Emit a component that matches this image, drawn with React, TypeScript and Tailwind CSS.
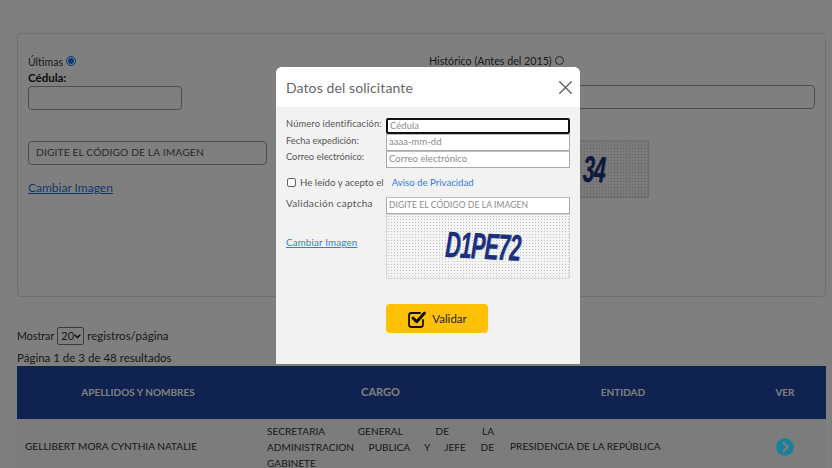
import { FaChevronCircleRight } from "react-icons/fa";
import { X } from "lucide-react";

const font = "font-['Lato','Open_Sans',sans-serif]";

function Captcha({ text, className }: { text: string; className: string }) {
  return (
    <div
      className={`flex items-center bg-[#f4f4f4] bg-[radial-gradient(#c4c4c4_0.7px,transparent_0.8px)] bg-[length:3px_3px] border border-[#d8d8d8] overflow-hidden ${className}`}
    >
      <span className="w-full text-center font-['Liberation_Sans',sans-serif] italic font-bold text-[37px] leading-none tracking-[-1px] text-[#1d2f78] [text-shadow:1px_0_0_#7f92d0] [transform:rotate(3deg)_scaleX(0.57)]">
        {text}
      </span>
    </div>
  );
}

function ModalField({ placeholder, focused, className }: { placeholder: string; focused?: boolean; className?: string }) {
  return (
    <div
      className={`px-[2px] bg-white flex items-center text-[#8a8a8a] tracking-[0.1px] ${className ?? "text-[9.4px]"} ${
        focused ? "border-[#111] border-2 rounded-[2px] h-[16px]" : "h-[17px] border border-[#a9a9a9] border-t-[#bcbcbc]"
      }`}
    >
      {placeholder}
    </div>
  );
}

export default function App() {
  return (
    <div className={`relative h-[468px] w-[832px] overflow-hidden bg-white text-[#212121] ${font}`}>
      <div className="pt-[33px] pl-[17px] pr-[6px]">
        <div className="h-[264px] rounded-[4px] border border-[#e0e0e0] px-[10px] pt-[21px] flex">
          <div className="w-[401px] shrink-0">
            <div className="flex items-center h-[15px] text-[10.5px] text-[#333]">
              Últimas
              <span className="ml-[3px] mb-[3px] w-[10px] h-[10px] rounded-full border-[1.5px] border-[#0a75e0] flex items-center justify-center">
                <span className="w-[6px] h-[6px] rounded-full bg-[#0a75e0]" />
              </span>
            </div>
            <div className="text-[11.5px] font-bold leading-[15px]">Cédula:</div>
            <div className="mt-[1px] w-[154px] h-[24px] rounded-[4px] border border-[#9a9a9a] bg-white" />
            <div className="mt-[31px] w-[239px] h-[24px] rounded-[4px] border border-[#9a9a9a] px-[7px] flex items-center text-[10.3px] text-[#555] tracking-[0.1px]">
              DIGITE EL CÓDIGO DE LA IMAGEN
            </div>
            <a className="block mt-[16px] text-[12px] underline text-[#1f6fd6] leading-[14px]">Cambiar Imagen</a>
          </div>
          <div className="flex-1">
            <div className="flex items-center h-[15px] -mt-[1px] text-[10.7px] text-[#333]">
              Histórico (Antes del 2015)
              <span className="ml-[3px] mb-[3px] w-[9px] h-[9px] rounded-full border border-[#555]" />
            </div>
            <div className="mt-[16px] h-[24px] rounded-[4px] border border-[#9a9a9a]" />
            <Captcha text="34" className="mt-[31px] w-[220px] h-[58px] pl-[110px]" />
          </div>
        </div>

        <div className="mt-[30px] flex items-center h-[18px] text-[11.5px] text-[#333]">
          <span className="text-[10.7px]">Mostrar</span>
          <span className="mx-[3px] w-[27px] h-[18px] border border-[#777] rounded-[2px] flex items-center justify-between pl-[3px] pr-[2px] text-[11px]">
            20
            <svg width="7" height="5" viewBox="0 0 7 5" fill="none" stroke="#222" strokeWidth="1.5">
              <path d="M0.7 0.8 3.5 3.6 6.3 0.8" />
            </svg>
          </span>
          registros/página
        </div>
        <div className="mt-[6px] text-[11.5px] leading-[14px] text-[#333]">Página 1 de 3 de 48 resultados</div>

        <table className="mt-[1px] w-[809px] table-fixed border-collapse">
          <thead>
            <tr className="bg-[#20449e] text-white text-[10px] h-[53px]">
              <th className="w-[242px] font-bold">APELLIDOS Y NOMBRES</th>
              <th className="w-[243px] font-bold text-[11px]">CARGO</th>
              <th className="w-[242px] font-bold">ENTIDAD</th>
              <th className="font-bold">VER</th>
            </tr>
          </thead>
          <tbody>
            <tr className="bg-[#f8f8f8] text-[10.1px] text-[#333]">
              <td className="px-[8px] py-[4px]">GELLIBERT MORA CYNTHIA NATALIE</td>
              <td className="px-[8px] py-[4px] leading-[16px]">
                <span className="block [text-align-last:justify]">SECRETARIA GENERAL DE LA</span>
                <span className="block [text-align-last:justify]">ADMINISTRACION PUBLICA Y JEFE DE</span>
                <span className="block">GABINETE</span>
              </td>
              <td className="px-[8px] py-[4px]">PRESIDENCIA DE LA REPÚBLICA</td>
              <td className="py-[4px]">
                <FaChevronCircleRight className="relative z-20 mx-auto text-[18px] text-[#17809b]" />
              </td>
            </tr>
          </tbody>
        </table>
      </div>

      <div className="absolute inset-0 z-10 bg-black/50" />

      <div className="absolute z-20 left-[276px] top-[67px] w-[304px] h-[297px] rounded-t-[6px] overflow-hidden bg-[#f2f2f2] text-[#555]">
        <div className="h-[40px] bg-white pl-[10px] pr-[3px] flex items-center justify-between">
          <span className="text-[14px] tracking-[0.1px] text-[#666]">Datos del solicitante</span>
          <X size={23} strokeWidth={1.3} className="text-[#555]" />
        </div>
        <div className="px-[10px] pt-[11px]">
          <div className="flex">
            <div className="w-[100px] shrink-0 -mt-[2px] text-[9.3px] leading-[16.5px] whitespace-nowrap">
              <div className="tracking-[0.14px]">Número identificación:</div>
              <div>Fecha expedición:</div>
              <div>Correo electrónico:</div>
            </div>
            <div className="w-[185px]">
              <ModalField placeholder="Cédula" focused />
              <ModalField placeholder="aaaa-mm-dd" />
              <ModalField placeholder="Correo electrónico" />
            </div>
          </div>
          <div className="mt-[6px] h-[16px] flex items-center text-[9.7px] whitespace-nowrap">
            <span className="w-[9px] h-[9px] ml-[1px] mr-[4px] rounded-[2px] border border-[#666] bg-white" />
            He leído y acepto el
            <a className="ml-[8px] text-[9.65px] text-[#2f7de0]">Aviso de Privacidad</a>
          </div>
          <div className="mt-[7px] flex">
            <div className="w-[100px] shrink-0 -mt-[1px] text-[10px] tracking-[0.3px]">
              <div className="leading-[14px]">Validación captcha</div>
              <a className="block mt-[25px] underline text-[#2f7de0] leading-[14px] text-[9.7px] tracking-[0.2px]">Cambiar Imagen</a>
            </div>
            <div className="w-[185px]">
              <ModalField placeholder="DIGITE EL CÓDIGO DE LA IMAGEN" className="text-[8.5px]" />
              <Captcha text="D1PE72" className="h-[65px] pl-[10px]" />
            </div>
          </div>
          <div className="mt-[25px] ml-[100px] w-[102px] h-[29px] rounded-[4px] bg-[#ffc107] flex items-center justify-center gap-[5px] text-[11.5px] text-[#222]">
            <svg width="20" height="20" viewBox="0 0 20 20" fill="none" stroke="#111" strokeLinecap="round" strokeLinejoin="round">
              <path strokeWidth="1.8" d="M16 11v4.5a2.5 2.5 0 0 1-2.5 2.5h-9A2.5 2.5 0 0 1 2 15.5v-9A2.5 2.5 0 0 1 4.5 4h8.5" />
              <path strokeWidth="3" d="M6 9l3.7 3.7L17.5 4" />
            </svg>
            Validar
          </div>
        </div>
      </div>
    </div>
  );
}
